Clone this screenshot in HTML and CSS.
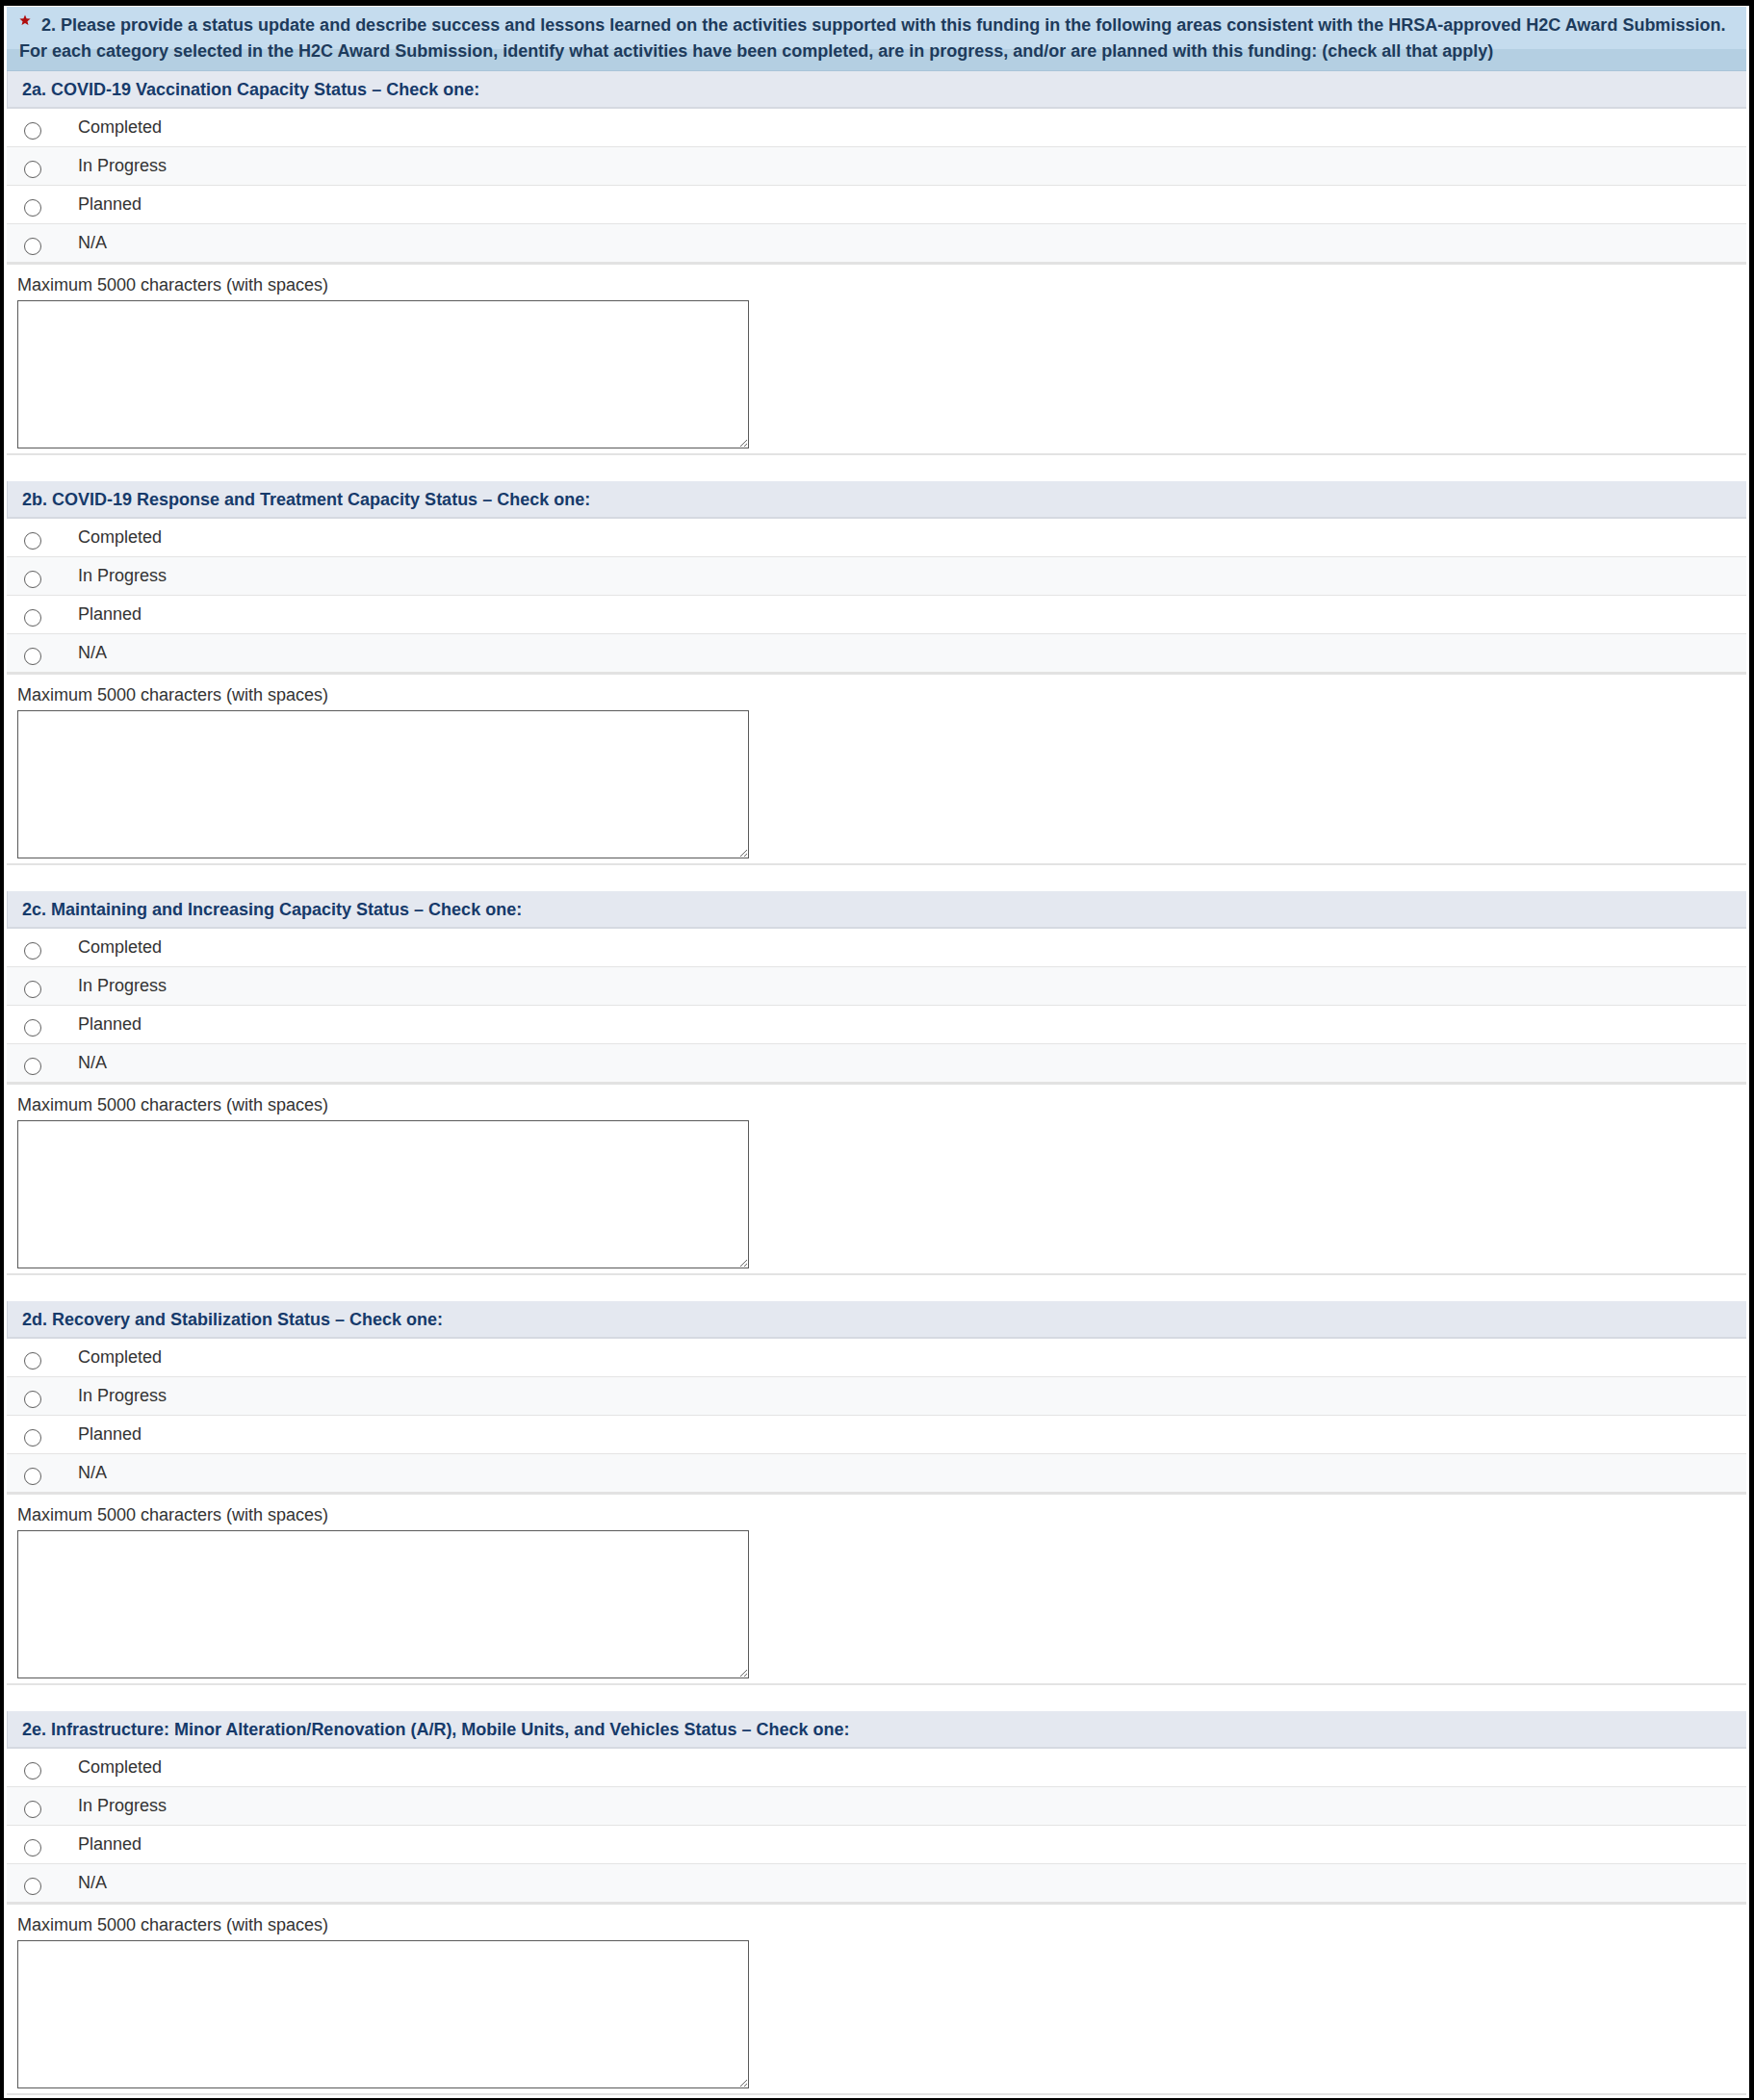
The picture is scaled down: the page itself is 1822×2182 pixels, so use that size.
FILE: index.html
```html
<!DOCTYPE html>
<html lang="en">
<head>
<meta charset="utf-8">
<title>H2C Status Update</title>
<link rel="stylesheet" href="styles.css">
</head>
<body>
<div class="frame">
  <div class="q-header">
    <svg class="req" viewBox="0 0 20 20" width="12" height="12" aria-hidden="true"><polygon points="10,1 12.6,7.2 19.3,7.6 14.1,11.9 15.8,18.5 10,14.8 4.2,18.5 5.9,11.9 0.7,7.6 7.4,7.2" fill="#b00d0d"/></svg>
    <span class="q-text">2. Please provide a status update and describe success and lessons learned on the activities supported with this funding in the following areas consistent with the HRSA-approved H2C Award Submission.<br>For each category selected in the H2C Award Submission, identify what activities have been completed, are in progress, and/or are planned with this funding: (check all that apply)</span>
  </div>

  <section class="sub">
    <div class="sub-head">2a. COVID-19 Vaccination Capacity Status – Check one:</div>
    <div class="options">
      <label class="row"><input type="radio" name="q2a"><span>Completed</span></label>
      <label class="row alt"><input type="radio" name="q2a"><span>In Progress</span></label>
      <label class="row"><input type="radio" name="q2a"><span>Planned</span></label>
      <label class="row alt"><input type="radio" name="q2a"><span>N/A</span></label>
    </div>
    <div class="comment">
      <div class="hint">Maximum 5000 characters (with spaces)</div>
      <textarea class="box"></textarea>
    </div>
  </section>

  <section class="sub">
    <div class="sub-head">2b. COVID-19 Response and Treatment Capacity Status – Check one:</div>
    <div class="options">
      <label class="row"><input type="radio" name="q2b"><span>Completed</span></label>
      <label class="row alt"><input type="radio" name="q2b"><span>In Progress</span></label>
      <label class="row"><input type="radio" name="q2b"><span>Planned</span></label>
      <label class="row alt"><input type="radio" name="q2b"><span>N/A</span></label>
    </div>
    <div class="comment">
      <div class="hint">Maximum 5000 characters (with spaces)</div>
      <textarea class="box"></textarea>
    </div>
  </section>

  <section class="sub">
    <div class="sub-head">2c. Maintaining and Increasing Capacity Status – Check one:</div>
    <div class="options">
      <label class="row"><input type="radio" name="q2c"><span>Completed</span></label>
      <label class="row alt"><input type="radio" name="q2c"><span>In Progress</span></label>
      <label class="row"><input type="radio" name="q2c"><span>Planned</span></label>
      <label class="row alt"><input type="radio" name="q2c"><span>N/A</span></label>
    </div>
    <div class="comment">
      <div class="hint">Maximum 5000 characters (with spaces)</div>
      <textarea class="box"></textarea>
    </div>
  </section>

  <section class="sub">
    <div class="sub-head">2d. Recovery and Stabilization Status – Check one:</div>
    <div class="options">
      <label class="row"><input type="radio" name="q2d"><span>Completed</span></label>
      <label class="row alt"><input type="radio" name="q2d"><span>In Progress</span></label>
      <label class="row"><input type="radio" name="q2d"><span>Planned</span></label>
      <label class="row alt"><input type="radio" name="q2d"><span>N/A</span></label>
    </div>
    <div class="comment">
      <div class="hint">Maximum 5000 characters (with spaces)</div>
      <textarea class="box"></textarea>
    </div>
  </section>

  <section class="sub">
    <div class="sub-head">2e. Infrastructure: Minor Alteration/Renovation (A/R), Mobile Units, and Vehicles Status – Check one:</div>
    <div class="options">
      <label class="row"><input type="radio" name="q2e"><span>Completed</span></label>
      <label class="row alt"><input type="radio" name="q2e"><span>In Progress</span></label>
      <label class="row"><input type="radio" name="q2e"><span>Planned</span></label>
      <label class="row alt"><input type="radio" name="q2e"><span>N/A</span></label>
    </div>
    <div class="comment">
      <div class="hint">Maximum 5000 characters (with spaces)</div>
      <textarea class="box"></textarea>
    </div>
  </section>
</div>
</body>
</html>
```

FILE: styles.css
```css
html, body {
  margin: 0;
  padding: 0;
  background: #ffffff;
}

body {
  font-family: "Liberation Sans", Arial, sans-serif;
  font-size: 18px;
  color: #333333;
}

.frame {
  width: 1822px;
  box-sizing: border-box;
  border-style: solid;
  border-color: #000000;
  border-width: 6px 5px 2px 4px;
  padding: 1px 3px 3px 3px;
  background: #ffffff;
}

.q-header {
  height: 67px;
  box-sizing: border-box;
  padding: 6px 10px 0 13px;
  background: linear-gradient(to bottom, #c5dcee 0, #c5dcee 44px, #b4cfe2 44px, #b4cfe2 66px, #a9c4d8 66px);
  color: #1d3b5c;
  font-weight: bold;
  line-height: 27px;
  white-space: nowrap;
}

.req {
  display: inline-block;
  vertical-align: 5px;
  margin-right: 6px;
}

.sub {
  margin-bottom: 27px;
}

.sub:last-child {
  margin-bottom: 0;
}

.sub-head {
  height: 37px;
  line-height: 38px;
  padding-left: 15px;
  background: #e4e8f0;
  border-left: 1px solid #cfd4dd;
  border-bottom: 2px solid #d5d9e1;
  color: #163a6a;
  font-weight: bold;
}

.options {
  display: flex;
  flex-direction: column;
}

.row {
  display: flex;
  align-items: center;
  height: 39px;
  padding-left: 18px;
  border-bottom: 1px solid #e4e4e4;
  background: #ffffff;
}

.row.alt {
  background: #f8f9fa;
}

.row:last-child {
  border-bottom: 3px solid #e2e2e2;
}

.row input {
  -webkit-appearance: none;
  appearance: none;
  width: 18px;
  height: 18px;
  margin: 6px 38px 0 0;
  border: 1px solid #5f5f5f;
  border-radius: 50%;
  background: #ffffff;
  flex: none;
}

.comment {
  padding: 9px 11px 5px 11px;
  border-bottom: 2px solid #e3e3e3;
}

.hint {
  line-height: 24px;
  color: #333333;
}

.box {
  display: block;
  width: 760px;
  height: 154px;
  box-sizing: border-box;
  margin-top: 4px;
  border: 1px solid #5a5a5a;
  border-radius: 0;
  padding: 2px;
  font-family: "Liberation Sans", Arial, sans-serif;
  font-size: 18px;
  background: #ffffff;
}
```
